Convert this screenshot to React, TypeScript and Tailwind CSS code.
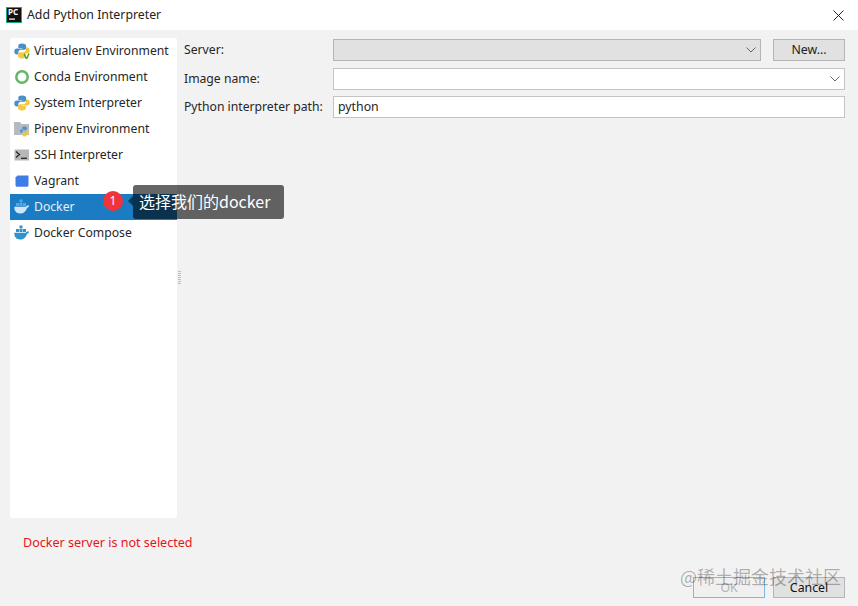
const font = "font-['Noto_Sans','Liberation_Sans',sans-serif]";

function PythonIcon({ v = false, size = 16 }: { v?: boolean; size?: number }) {
  return (
    <svg width={size} height={size} viewBox="0 0 16 16" className="shrink-0">
      <path d="M8 .5C4.900.5 4.300 1.600 4.300 2.900V5h3.900v.6H2.800C1.200 5.600.3 6.800.3 8.500c0 1.900.9 3 2.500 3h1.500V9.400c0-1.400 1.200-2.600 2.600-2.600h3.300c1.100 0 2-.9 2-2.100V2.900C12.200 1.600 11 .5 8 .5z" fill="#4b8fc9" />
      <path d="M8.100 15.500c3.100 0 3.700-1.100 3.700-2.400V11H7.900v-.6h5.300c1.600 0 2.500-1.200 2.500-2.900 0-1.900-.9-3-2.500-3h-1.200v2.100c0 1.400-1.200 2.600-2.600 2.600H6.100c-1.100 0-2 .9-2 2.100v1.800c0 1.300 1.100 2.400 4 2.400z" fill="#f4c93d" />
      {v && <path d="M10 10.500l2.200 5h.6l2.200-5" fill="none" stroke="#4fa02f" strokeWidth="1.500" />}
    </svg>
  );
}

function Conda() {
  return (
    <svg width="16" height="16" viewBox="0 0 16 16" className="shrink-0">
      <circle cx="8" cy="8" r="5.700" fill="none" stroke="#62b765" strokeWidth="2.500" />
    </svg>
  );
}

function Pipenv() {
  return (
    <svg width="16" height="16" viewBox="0 0 16 16" className="shrink-0">
      <path d="M0 1h6l1.500 2H15v11H0z" fill="#b3bcc3" />
      <path d="M10.500 5.500c-1.700 0-2.200.7-2.200 1.500v1h2.200v.4H7.300c-.8 0-1.300.7-1.300 1.700s.5 1.600 1.300 1.600h1v-1.100c0-.8.600-1.400 1.300-1.400h2c.7 0 1.100-.5 1.100-1.100V7c0-.8-.6-1.500-2.200-1.500z" fill="#4b8fc9" />
      <path d="M10.600 15.500c1.700 0 2.200-.7 2.200-1.500v-1h-2.200v-.4h3.200c.8 0 1.300-.7 1.300-1.700s-.5-1.600-1.300-1.600h-1v1.100c0 .8-.6 1.400-1.300 1.400h-2c-.7 0-1.100.5-1.100 1.100V14c0 .8.600 1.500 2.200 1.500z" fill="#f4c93d" />
    </svg>
  );
}

function Ssh() {
  return (
    <svg width="16" height="16" viewBox="0 0 16 16" className="shrink-0">
      <rect x="0.500" y="2.500" width="14.500" height="11" fill="#b5b7b9" />
      <path d="M2 4.500l3.500 3L2 10.500" fill="none" stroke="#2a2a2a" strokeWidth="1.300" />
      <path d="M7 11.300h6" stroke="#2a2a2a" strokeWidth="1.300" />
    </svg>
  );
}

function Vagrant() {
  return (
    <svg width="16" height="16" viewBox="0 0 16 16" className="shrink-0">
      <path d="M3.500 2.500H14.500v9.500c0 1-.8 1.800-1.700 1.800H3.200c-1 0-1.700-.8-1.700-1.800V4.500z" fill="#3f7de6" />
    </svg>
  );
}

function Whale({ selected = false }: { selected?: boolean }) {
  const a = selected ? "#58a8e0" : "#2f93cc";
  const b = selected ? "#cfe6f6" : "#2f93cc";
  return (
    <svg width="16" height="16" viewBox="0 0 16 16" className="shrink-0">
      <rect x="5.500" y="0.500" width="3" height="3" fill={a} />
      <rect x="2" y="4" width="3" height="3" fill={a} />
      <rect x="5.500" y="4" width="3" height="3" fill={a} />
      <rect x="9" y="4" width="3" height="3" fill={a} />
      <path d="M.3 7.800h11.500c.4-1.100 1.500-1.700 3.400-1.200-.2 1.200-1 2-2.200 2.300-1 3.200-3.400 5.600-6.900 5.600-3.800 0-6-2.700-5.800-6.700z" fill={b} />
    </svg>
  );
}

function Chevron() {
  return (
    <svg width="12" height="8" viewBox="0 0 12 8" className="shrink-0">
      <path d="M1.500 1.500L6 6l4.500-4.500" fill="none" stroke="#666" strokeWidth="1" />
    </svg>
  );
}

const items = [
  { label: "Virtualenv Environment", icon: <PythonIcon v /> },
  { label: "Conda Environment", icon: <Conda /> },
  { label: "System Interpreter", icon: <PythonIcon /> },
  { label: "Pipenv Environment", icon: <Pipenv /> },
  { label: "SSH Interpreter", icon: <Ssh /> },
  { label: "Vagrant", icon: <Vagrant /> },
  { label: "Docker", icon: <Whale selected />, selected: true },
  { label: "Docker Compose", icon: <Whale /> },
];

function Row({ label, children }: { label: string; children: React.ReactNode }) {
  return (
    <div className="flex items-center">
      <div className="w-[149px] text-[12.2px] text-[#262626]">{label}</div>
      {children}
    </div>
  );
}

export default function App() {
  return (
    <div className={`relative flex h-[606px] w-[858px] flex-col overflow-hidden bg-[#f2f2f2] ${font} text-[12.2px] leading-none`}>
      <header className="flex h-[30px] shrink-0 items-center bg-white pl-[6px] pr-[14px]">
        <svg width="16" height="16" viewBox="0 0 16 16" className="shrink-0">
          <rect x="0.500" y="0.500" width="15" height="15" fill="#111" stroke="#21a878" />
          <rect x="3" y="11.500" width="6" height="1.200" fill="#fff" />
        </svg>
        <span className="absolute left-[8px] top-[8px] text-[8px] font-bold text-white">PC</span>
        <span className="ml-[5px] text-[12.3px] text-[#222]">Add Python Interpreter</span>
        <svg width="11" height="11" viewBox="0 0 11 11" className="ml-auto">
          <path d="M.5.500l10 10M10.500.500l-10 10" stroke="#222" strokeWidth="1" />
        </svg>
      </header>

      <main className="flex h-[488px] shrink-0 pl-[10px] pr-[13px] pt-[8px]">
        <aside className="flex h-[480px] w-[167px] shrink-0 flex-col rounded-[2px] bg-white">
          {items.map((it) => (
            <div
              key={it.label}
              className={`flex h-[26px] items-center gap-[4px] pl-[4px] ${it.selected ? "bg-[#1b7cc3] text-[#e4f0f8]" : "text-[#262626]"}`}
            >
              <span className="flex w-[16px] justify-center">{it.icon}</span>
              <span className="whitespace-nowrap text-[12.2px]">{it.label}</span>
            </div>
          ))}
        </aside>
        <div className="relative w-[7px] shrink-0">
          <div className="absolute left-[1px] top-[232px] h-[14px] w-[3px] bg-[repeating-linear-gradient(0deg,#bcbcbc_0,#bcbcbc_1px,transparent_1px,transparent_2px)]" />
        </div>
        <section className="flex flex-1 flex-col pt-[1px]">
          <Row label="Server:">
            <div className="flex h-[22px] w-[428px] items-center justify-end border border-[#b5b5b5] bg-[#e1e1e1] pr-[3px]">
              <Chevron />
            </div>
            <button className="ml-[12px] flex h-[22px] w-[72px] items-center justify-center border border-[#b5b5b5] bg-[#e1e1e1] text-[12.3px] text-[#222]">
              New...
            </button>
          </Row>
          <div className="mt-[7px]">
            <Row label="Image name:">
              <div className="flex h-[22px] w-[512px] items-center justify-end border border-[#c4c4c4] bg-white pr-[3px]">
                <Chevron />
              </div>
            </Row>
          </div>
          <div className="mt-[6px]">
            <Row label="Python interpreter path:">
              <div className="flex h-[22px] w-[512px] items-center border border-[#c4c4c4] bg-white pl-[4px] text-[12.3px] text-[#262626]">
                python
              </div>
            </Row>
          </div>
        </section>
      </main>

      <footer className="flex flex-1 flex-col pl-[23px] pr-[13px]">
        <div className="pt-[19px] text-[12.55px] text-[#e8141c]">Docker server is not selected</div>
        <div className="mt-auto flex justify-end gap-[8px] pb-[8px]">
          <button className="flex h-[21px] w-[72px] items-center justify-center border border-[#7db7e4] bg-[#f0f0f0] pt-[2px] text-[12.3px] text-[#b5b5b5]">OK</button>
          <button className="flex h-[21px] w-[72px] items-center justify-center border border-[#b5b5b5] bg-[#e1e1e1] pt-[2px] text-[12.3px] text-[#111]">Cancel</button>
        </div>
      </footer>

      <div className="absolute left-[103px] top-[191px] flex h-[20px] w-[20px] items-center justify-center rounded-full bg-[#f0343a] pb-[1px] text-[12px] text-white">1</div>
      <div className="absolute left-[128px] top-[196px] h-0 w-0 border-y-[5px] border-r-[5px] border-y-transparent border-r-[#0b3a58]" />
      <div className="absolute left-[133px] top-[185px] flex h-[34px] w-[151px] items-center rounded-[3px] bg-black/60 pb-[2px] pl-[6px] font-['Noto_Sans_CJK_SC',sans-serif] text-[16px] text-white">
        选择我们的docker
      </div>
      <div className="absolute left-[680px] top-[567px] font-['Noto_Sans_CJK_SC',sans-serif] text-[18px] text-black/30">
        @稀土掘金技术社区
      </div>
    </div>
  );
}
